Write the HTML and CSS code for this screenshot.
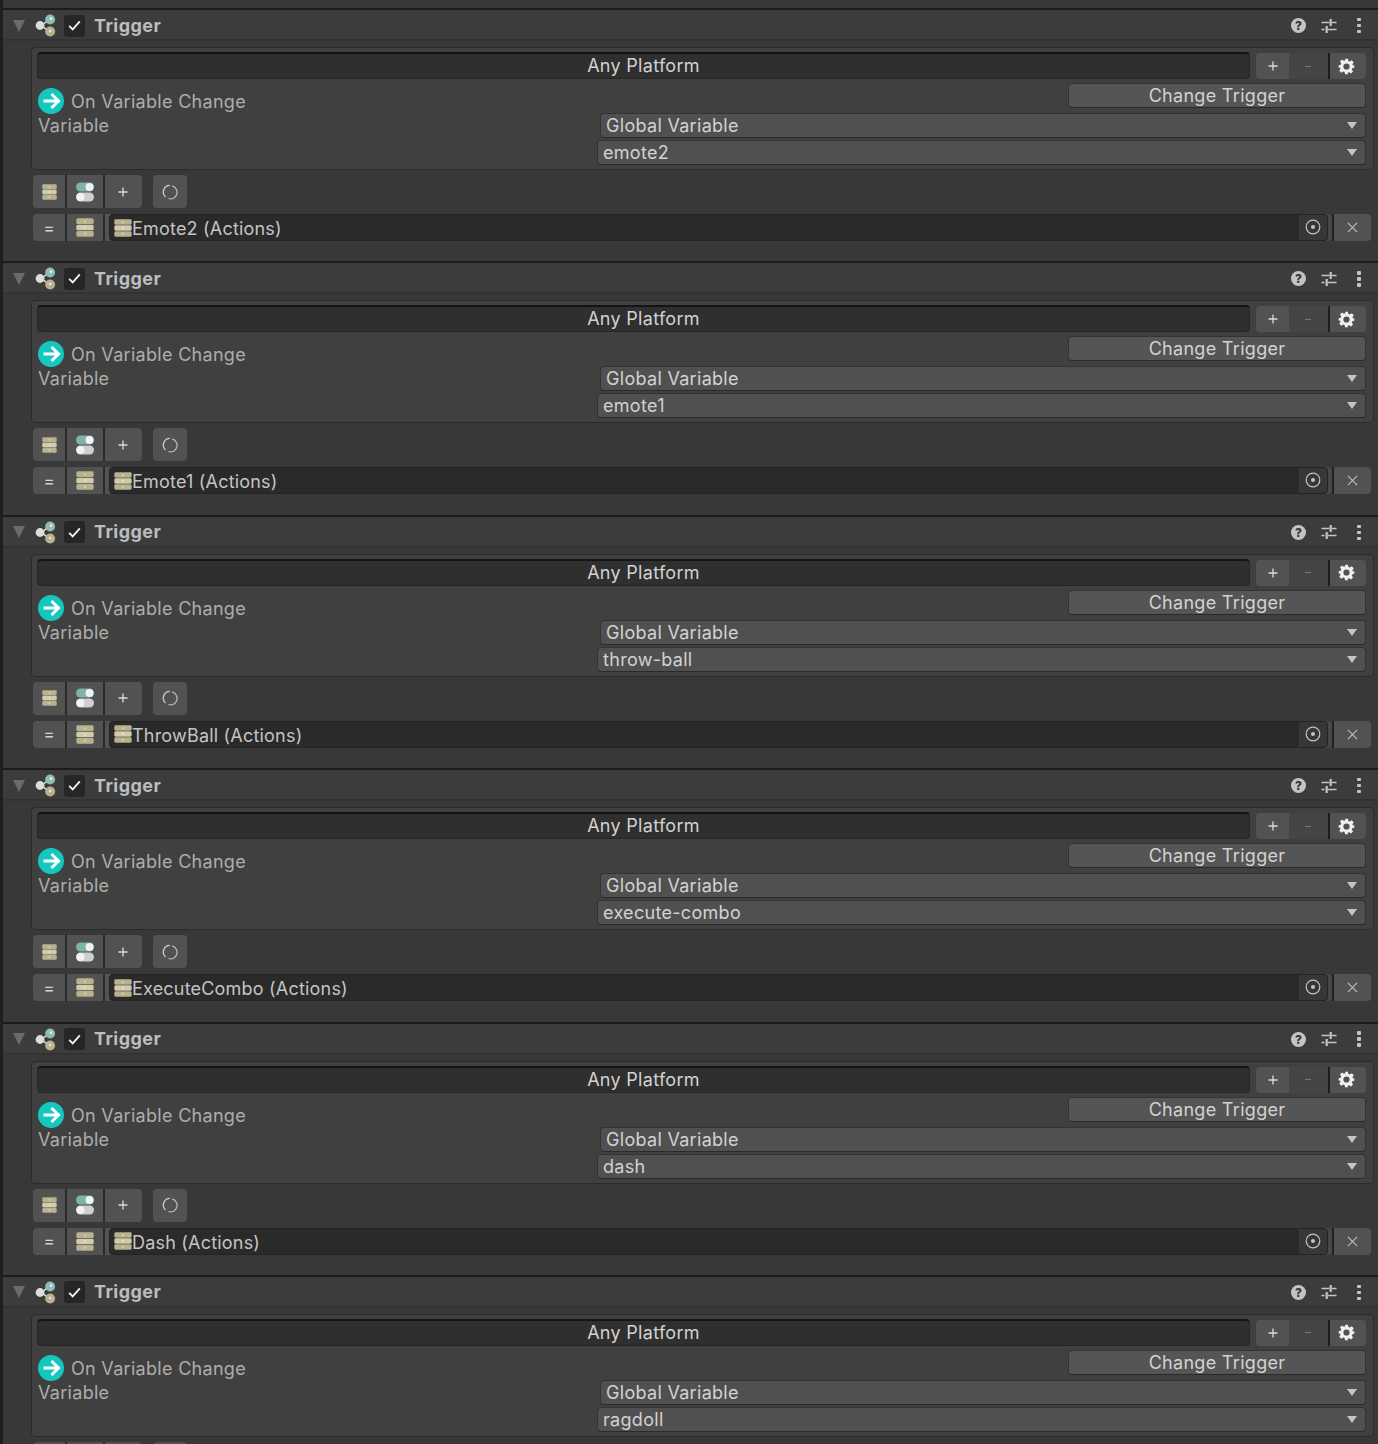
FILE: index.html
```html
<!DOCTYPE html>
<html lang="en">
<head>
<meta charset="utf-8">
<title>Triggers</title>
<link rel="stylesheet" href="styles.css">
</head>
<body>
<svg class="defs" width="0" height="0" aria-hidden="true">
  <symbol id="i-share" viewBox="0 0 24 24">
    <path d="M7 12 L16 5 M7 12 L16 19" stroke="#dfe3e0" stroke-width="1.6" fill="none"/>
    <circle cx="16.5" cy="5.5" r="5.4" fill="#8fbdb6"/><circle cx="17.5" cy="4.5" r="1.4" fill="#e9f4f2"/>
    <circle cx="16.5" cy="18.5" r="5.4" fill="#b9b190"/><circle cx="16.5" cy="18" r="1.4" fill="#eee8d0"/>
    <circle cx="5.5" cy="12" r="4.8" fill="#dddddd"/>
  </symbol>
  <symbol id="i-stack" viewBox="0 0 16 16" preserveAspectRatio="none">
    <rect x="0.3" y="0.3" width="15.4" height="4.8" rx="1.3" fill="#b9b28f"/>
    <rect x="0.3" y="5.6" width="15.4" height="4.8" rx="1.3" fill="#d3ccab"/>
    <rect x="0.3" y="10.9" width="15.4" height="4.8" rx="1.3" fill="#b9b28f"/>
    <path d="M8 2v1.6M8 7.2v1.6M8 12.4v1.6" stroke="#f0ebd6" stroke-width="1"/>
  </symbol>
  <symbol id="i-toggle" viewBox="0 0 20 20">
    <rect x="1" y="0.5" width="18" height="9" rx="4.5" fill="#7db3aa"/><circle cx="14.5" cy="5" r="4" fill="#f2f2f2"/>
    <rect x="1" y="10.5" width="18" height="9" rx="4.5" fill="#cfcfcf"/><circle cx="5.5" cy="15" r="4" fill="#f2f2f2"/>
  </symbol>
  <symbol id="i-gear" viewBox="0 0 24 24">
    <path fill="#f0f0f0" fill-rule="evenodd" d="M10 1h4l.7 3.2 1.9.8 2.8-1.8 2.8 2.8-1.8 2.8.8 1.9L23 10.4v3.2l-2.8.7-.8 1.9 1.8 2.8-2.8 2.8-2.8-1.8-1.9.8L14 23h-4l-.7-3.2-1.9-.8-2.8 1.8-2.8-2.8 1.8-2.8-.8-1.9L1 13.6v-3.2l2.8-.7.8-1.9L2.8 5l2.8-2.8 2.8 1.8 1.9-.8zM12 7.6a4.4 4.4 0 1 0 0 8.8 4.4 4.4 0 0 0 0-8.8z"/>
  </symbol>
  <symbol id="i-sliders" viewBox="0 0 16 16">
    <path d="M0.5 4.5h8M11 4.5h4.5M0.5 11.5h3M7 11.5h8.5" stroke="#c4c4c4" stroke-width="1.3" fill="none"/>
    <path d="M9.7 1v7M5.7 8v7" stroke="#c4c4c4" stroke-width="2.2" fill="none"/>
  </symbol>
  <symbol id="i-arrow" viewBox="0 0 26 26">
    <circle cx="13" cy="13" r="13" fill="#14c8c0"/>
    <path d="M5.5 13H20M13.5 6l7 7-7 7" fill="none" stroke="#ffffff" stroke-width="3"/>
  </symbol>
  <symbol id="i-sync" viewBox="0 0 16 16">
    <path d="M10.2 1.8A6.7 6.7 0 0 1 14.2 11.5 6.7 6.7 0 0 1 6.4 14.5" fill="none" stroke="#b8b8b8" stroke-width="1.3"/>
    <path d="M3.6 13A6.7 6.7 0 0 1 7.8 1.3" fill="none" stroke="#cfcfcf" stroke-width="1.3"/>
  </symbol>
  <symbol id="i-target" viewBox="0 0 16 16">
    <circle cx="8" cy="8" r="6.8" fill="none" stroke="#c4c4c4" stroke-width="1.2"/><circle cx="8" cy="8" r="2" fill="#c4c4c4"/>
  </symbol>
  <symbol id="i-x" viewBox="0 0 12 12">
    <path d="M1 1l10 10M11 1L1 11" stroke="#c4c4c4" stroke-width="1.1" fill="none"/>
  </symbol>
  <symbol id="i-plus" viewBox="0 0 10 10">
    <path d="M5 0.5v9M0.5 5h9" stroke="#dcdcdc" stroke-width="1.3" fill="none"/>
  </symbol>
  <symbol id="i-check" viewBox="0 0 14 12">
    <path d="M1.2 6.5l3.8 3.8 7.8-8.8" stroke="#f2f2f2" stroke-width="2" fill="none"/>
  </symbol>
</svg>

<main class="list">

<section class="item">
  <header class="head">
    <span class="caret"></span><svg class="ic-share"><use href="#i-share"/></svg>
    <span class="check"><svg class="ic-check"><use href="#i-check"/></svg></span>
    <span class="title">Trigger</span>
    <span class="help">?</span><svg class="ic-sliders"><use href="#i-sliders"/></svg><span class="kebab"><i></i><i></i><i></i></span>
  </header>
  <div class="box">
    <div class="platform">
      <div class="platform-bar">Any Platform</div>
      <div class="pm"><span class="pm-btn plus"><svg class="ic-plus"><use href="#i-plus"/></svg></span><span class="pm-btn minus"><b></b></span><span class="pm-btn gear"><svg class="ic-gear"><use href="#i-gear"/></svg></span></div>
    </div>
    <div class="fields">
      <div class="labels">
        <div class="event"><svg class="ic-arrow"><use href="#i-arrow"/></svg><span>On Variable Change</span></div>
        <div class="var-label">Variable</div>
      </div>
      <div class="controls">
        <div class="change">Change Trigger</div>
        <div class="select scope"><span>Global Variable</span><i class="tri"></i></div>
        <div class="select name"><span>emote2</span><i class="tri"></i></div>
      </div>
    </div>
  </div>
  <div class="tools">
    <div class="group"><span class="tb w32"><svg class="ic-stack-s"><use href="#i-stack"/></svg></span><span class="tb w36"><svg class="ic-toggle"><use href="#i-toggle"/></svg></span><span class="tb w38"><svg class="ic-plus"><use href="#i-plus"/></svg></span></div>
    <span class="tb solo"><svg class="ic-sync"><use href="#i-sync"/></svg></span>
  </div>
  <div class="row">
    <div class="group"><span class="tb w32 eq">=</span><span class="tb w36"><svg class="ic-stack"><use href="#i-stack"/></svg></span><span class="tb stub"></span></div>
    <div class="obj"><svg class="ic-stack-o"><use href="#i-stack"/></svg><span class="obj-name">Emote2 (Actions)</span><span class="obj-pick"><svg class="ic-target"><use href="#i-target"/></svg></span></div>
    <span class="remove"><svg class="ic-x"><use href="#i-x"/></svg></span>
  </div>
</section>

<section class="item">
  <header class="head">
    <span class="caret"></span><svg class="ic-share"><use href="#i-share"/></svg>
    <span class="check"><svg class="ic-check"><use href="#i-check"/></svg></span>
    <span class="title">Trigger</span>
    <span class="help">?</span><svg class="ic-sliders"><use href="#i-sliders"/></svg><span class="kebab"><i></i><i></i><i></i></span>
  </header>
  <div class="box">
    <div class="platform">
      <div class="platform-bar">Any Platform</div>
      <div class="pm"><span class="pm-btn plus"><svg class="ic-plus"><use href="#i-plus"/></svg></span><span class="pm-btn minus"><b></b></span><span class="pm-btn gear"><svg class="ic-gear"><use href="#i-gear"/></svg></span></div>
    </div>
    <div class="fields">
      <div class="labels">
        <div class="event"><svg class="ic-arrow"><use href="#i-arrow"/></svg><span>On Variable Change</span></div>
        <div class="var-label">Variable</div>
      </div>
      <div class="controls">
        <div class="change">Change Trigger</div>
        <div class="select scope"><span>Global Variable</span><i class="tri"></i></div>
        <div class="select name"><span>emote1</span><i class="tri"></i></div>
      </div>
    </div>
  </div>
  <div class="tools">
    <div class="group"><span class="tb w32"><svg class="ic-stack-s"><use href="#i-stack"/></svg></span><span class="tb w36"><svg class="ic-toggle"><use href="#i-toggle"/></svg></span><span class="tb w38"><svg class="ic-plus"><use href="#i-plus"/></svg></span></div>
    <span class="tb solo"><svg class="ic-sync"><use href="#i-sync"/></svg></span>
  </div>
  <div class="row">
    <div class="group"><span class="tb w32 eq">=</span><span class="tb w36"><svg class="ic-stack"><use href="#i-stack"/></svg></span><span class="tb stub"></span></div>
    <div class="obj"><svg class="ic-stack-o"><use href="#i-stack"/></svg><span class="obj-name">Emote1 (Actions)</span><span class="obj-pick"><svg class="ic-target"><use href="#i-target"/></svg></span></div>
    <span class="remove"><svg class="ic-x"><use href="#i-x"/></svg></span>
  </div>
</section>

<section class="item">
  <header class="head">
    <span class="caret"></span><svg class="ic-share"><use href="#i-share"/></svg>
    <span class="check"><svg class="ic-check"><use href="#i-check"/></svg></span>
    <span class="title">Trigger</span>
    <span class="help">?</span><svg class="ic-sliders"><use href="#i-sliders"/></svg><span class="kebab"><i></i><i></i><i></i></span>
  </header>
  <div class="box">
    <div class="platform">
      <div class="platform-bar">Any Platform</div>
      <div class="pm"><span class="pm-btn plus"><svg class="ic-plus"><use href="#i-plus"/></svg></span><span class="pm-btn minus"><b></b></span><span class="pm-btn gear"><svg class="ic-gear"><use href="#i-gear"/></svg></span></div>
    </div>
    <div class="fields">
      <div class="labels">
        <div class="event"><svg class="ic-arrow"><use href="#i-arrow"/></svg><span>On Variable Change</span></div>
        <div class="var-label">Variable</div>
      </div>
      <div class="controls">
        <div class="change">Change Trigger</div>
        <div class="select scope"><span>Global Variable</span><i class="tri"></i></div>
        <div class="select name"><span>throw-ball</span><i class="tri"></i></div>
      </div>
    </div>
  </div>
  <div class="tools">
    <div class="group"><span class="tb w32"><svg class="ic-stack-s"><use href="#i-stack"/></svg></span><span class="tb w36"><svg class="ic-toggle"><use href="#i-toggle"/></svg></span><span class="tb w38"><svg class="ic-plus"><use href="#i-plus"/></svg></span></div>
    <span class="tb solo"><svg class="ic-sync"><use href="#i-sync"/></svg></span>
  </div>
  <div class="row">
    <div class="group"><span class="tb w32 eq">=</span><span class="tb w36"><svg class="ic-stack"><use href="#i-stack"/></svg></span><span class="tb stub"></span></div>
    <div class="obj"><svg class="ic-stack-o"><use href="#i-stack"/></svg><span class="obj-name">ThrowBall (Actions)</span><span class="obj-pick"><svg class="ic-target"><use href="#i-target"/></svg></span></div>
    <span class="remove"><svg class="ic-x"><use href="#i-x"/></svg></span>
  </div>
</section>

<section class="item">
  <header class="head">
    <span class="caret"></span><svg class="ic-share"><use href="#i-share"/></svg>
    <span class="check"><svg class="ic-check"><use href="#i-check"/></svg></span>
    <span class="title">Trigger</span>
    <span class="help">?</span><svg class="ic-sliders"><use href="#i-sliders"/></svg><span class="kebab"><i></i><i></i><i></i></span>
  </header>
  <div class="box">
    <div class="platform">
      <div class="platform-bar">Any Platform</div>
      <div class="pm"><span class="pm-btn plus"><svg class="ic-plus"><use href="#i-plus"/></svg></span><span class="pm-btn minus"><b></b></span><span class="pm-btn gear"><svg class="ic-gear"><use href="#i-gear"/></svg></span></div>
    </div>
    <div class="fields">
      <div class="labels">
        <div class="event"><svg class="ic-arrow"><use href="#i-arrow"/></svg><span>On Variable Change</span></div>
        <div class="var-label">Variable</div>
      </div>
      <div class="controls">
        <div class="change">Change Trigger</div>
        <div class="select scope"><span>Global Variable</span><i class="tri"></i></div>
        <div class="select name"><span>execute-combo</span><i class="tri"></i></div>
      </div>
    </div>
  </div>
  <div class="tools">
    <div class="group"><span class="tb w32"><svg class="ic-stack-s"><use href="#i-stack"/></svg></span><span class="tb w36"><svg class="ic-toggle"><use href="#i-toggle"/></svg></span><span class="tb w38"><svg class="ic-plus"><use href="#i-plus"/></svg></span></div>
    <span class="tb solo"><svg class="ic-sync"><use href="#i-sync"/></svg></span>
  </div>
  <div class="row">
    <div class="group"><span class="tb w32 eq">=</span><span class="tb w36"><svg class="ic-stack"><use href="#i-stack"/></svg></span><span class="tb stub"></span></div>
    <div class="obj"><svg class="ic-stack-o"><use href="#i-stack"/></svg><span class="obj-name">ExecuteCombo (Actions)</span><span class="obj-pick"><svg class="ic-target"><use href="#i-target"/></svg></span></div>
    <span class="remove"><svg class="ic-x"><use href="#i-x"/></svg></span>
  </div>
</section>

<section class="item">
  <header class="head">
    <span class="caret"></span><svg class="ic-share"><use href="#i-share"/></svg>
    <span class="check"><svg class="ic-check"><use href="#i-check"/></svg></span>
    <span class="title">Trigger</span>
    <span class="help">?</span><svg class="ic-sliders"><use href="#i-sliders"/></svg><span class="kebab"><i></i><i></i><i></i></span>
  </header>
  <div class="box">
    <div class="platform">
      <div class="platform-bar">Any Platform</div>
      <div class="pm"><span class="pm-btn plus"><svg class="ic-plus"><use href="#i-plus"/></svg></span><span class="pm-btn minus"><b></b></span><span class="pm-btn gear"><svg class="ic-gear"><use href="#i-gear"/></svg></span></div>
    </div>
    <div class="fields">
      <div class="labels">
        <div class="event"><svg class="ic-arrow"><use href="#i-arrow"/></svg><span>On Variable Change</span></div>
        <div class="var-label">Variable</div>
      </div>
      <div class="controls">
        <div class="change">Change Trigger</div>
        <div class="select scope"><span>Global Variable</span><i class="tri"></i></div>
        <div class="select name"><span>dash</span><i class="tri"></i></div>
      </div>
    </div>
  </div>
  <div class="tools">
    <div class="group"><span class="tb w32"><svg class="ic-stack-s"><use href="#i-stack"/></svg></span><span class="tb w36"><svg class="ic-toggle"><use href="#i-toggle"/></svg></span><span class="tb w38"><svg class="ic-plus"><use href="#i-plus"/></svg></span></div>
    <span class="tb solo"><svg class="ic-sync"><use href="#i-sync"/></svg></span>
  </div>
  <div class="row">
    <div class="group"><span class="tb w32 eq">=</span><span class="tb w36"><svg class="ic-stack"><use href="#i-stack"/></svg></span><span class="tb stub"></span></div>
    <div class="obj"><svg class="ic-stack-o"><use href="#i-stack"/></svg><span class="obj-name">Dash (Actions)</span><span class="obj-pick"><svg class="ic-target"><use href="#i-target"/></svg></span></div>
    <span class="remove"><svg class="ic-x"><use href="#i-x"/></svg></span>
  </div>
</section>

<section class="item">
  <header class="head">
    <span class="caret"></span><svg class="ic-share"><use href="#i-share"/></svg>
    <span class="check"><svg class="ic-check"><use href="#i-check"/></svg></span>
    <span class="title">Trigger</span>
    <span class="help">?</span><svg class="ic-sliders"><use href="#i-sliders"/></svg><span class="kebab"><i></i><i></i><i></i></span>
  </header>
  <div class="box">
    <div class="platform">
      <div class="platform-bar">Any Platform</div>
      <div class="pm"><span class="pm-btn plus"><svg class="ic-plus"><use href="#i-plus"/></svg></span><span class="pm-btn minus"><b></b></span><span class="pm-btn gear"><svg class="ic-gear"><use href="#i-gear"/></svg></span></div>
    </div>
    <div class="fields">
      <div class="labels">
        <div class="event"><svg class="ic-arrow"><use href="#i-arrow"/></svg><span>On Variable Change</span></div>
        <div class="var-label">Variable</div>
      </div>
      <div class="controls">
        <div class="change">Change Trigger</div>
        <div class="select scope"><span>Global Variable</span><i class="tri"></i></div>
        <div class="select name"><span>ragdoll</span><i class="tri"></i></div>
      </div>
    </div>
  </div>
  <div class="tools">
    <div class="group"><span class="tb w32"><svg class="ic-stack-s"><use href="#i-stack"/></svg></span><span class="tb w36"><svg class="ic-toggle"><use href="#i-toggle"/></svg></span><span class="tb w38"><svg class="ic-plus"><use href="#i-plus"/></svg></span></div>
    <span class="tb solo"><svg class="ic-sync"><use href="#i-sync"/></svg></span>
  </div>
</section>

</main>
</body>
</html>
```
FILE: styles.css
```css
* { box-sizing: border-box; }
html, body { margin: 0; height: 1444px; overflow: hidden; }
body {
  background: #383838;
  color: #d2d2d2;
  font: 18px/24px Inter, "Liberation Sans", sans-serif;
  letter-spacing: 0.3px;
  border-left: 3px solid #1f1f1f;
  padding-top: 8px;
}
.defs { position: absolute; }
.list { display: flex; flex-direction: column; }

.item { height: 253.4px; flex: none; border-top: 2px solid #1c1c1c; background: #383838; }

/* header */
.head {
  height: 31px;
  display: flex;
  align-items: center;
  background: #3c3c3c;
  border-bottom: 2px solid #333333;
  padding: 2px 15px 0 10px;
}
.caret { width: 0; height: 0; border: 6.5px solid transparent; border-top: 12px solid #6b6b6b; border-bottom: 0; margin-right: 10px; }
.ic-share { width: 22px; height: 23px; margin-right: 7px; }
.check {
  width: 21px; height: 22px; background: #262626; border-radius: 3px;
  display: flex; align-items: center; justify-content: center; margin-right: 9px;
}
.ic-check { width: 13px; height: 11px; }
.title { font-weight: 700; flex: 1; color: #bdbdbd; letter-spacing: 0.45px; }
.help {
  width: 15px; height: 15px; border-radius: 50%; background: #c4c4c4; color: #383838;
  font-size: 12px; font-weight: 800; line-height: 15px; text-align: center; letter-spacing: 0; margin-right: 15px;
}
.ic-sliders { width: 16px; height: 16px; margin-right: 20px; }
.kebab { display: flex; flex-direction: column; gap: 2.5px; margin-right: 2px; }
.kebab i { width: 4px; height: 3.5px; background: #c4c4c4; border-radius: 1px; }

/* box */
.box {
  margin: 6px 4px 0 28px;
  height: 123px;
  background: #404040;
  border: 1px solid #2b2b2b;
  border-radius: 4px;
  padding: 4px 7px 0 5px;
}
.platform { display: flex; gap: 6px; height: 27px; }
.platform-bar {
  flex: 1; background: #2f2f2f; border: 1px solid #262626; border-top: 2px solid #141414; border-radius: 4px;
  text-align: center; line-height: 24px;
}
.pm { width: 110px; display: flex; margin-top: 1px; height: 26px; }
.pm-btn { display: flex; align-items: center; justify-content: center; }
.pm-btn.plus { width: 33px; background: #525252; border-radius: 4px 0 0 4px; }
.pm-btn.minus { width: 39px; background: #454545; padding-right: 2px; }
.pm-btn.minus b { width: 6px; height: 1px; background: #777777; }
.pm-btn.gear { width: 38px; background: #525252; border-left: 2px solid #1e1e1e; border-radius: 0 4px 4px 0; padding-right: 3px; }
.ic-plus { width: 10px; height: 10px; }
.ic-gear { width: 17px; height: 17px; }

.fields { display: flex; margin-top: 4px; }
.labels { flex: 1; padding: 5px 0 0 1px; }
.event { display: flex; align-items: center; gap: 7px; height: 26px; color: #adadad; }
.event span { padding-top: 2px; }
.ic-arrow { width: 26px; height: 26px; }
.var-label { color: #adadad; line-height: 22px; padding-top: 1px; }
.controls { width: 769px; display: flex; flex-direction: column; align-items: flex-end; }
.change {
  width: 298px; height: 25px; background: #555555; border: 1px solid #333333; border-bottom-color: #2a2a2a;
  border-radius: 4px; text-align: center; line-height: 23px;
}
.select {
  height: 25px; background: #505050; border: 1px solid #333333; border-bottom-color: #2a2a2a; border-radius: 4px;
  display: flex; align-items: center; justify-content: space-between; line-height: 23px;
}
.select.scope { width: 766px; margin-top: 5px; padding: 0 8px 0 5px; }
.select.name { width: 769px; margin-top: 2px; padding: 0 8px 0 5px; }
.tri { width: 0; height: 0; border: 5.5px solid transparent; border-top: 7px solid #c4c4c4; border-bottom: 0; }

/* toolbar */
.tools { display: flex; gap: 11px; margin: 5px 0 0 30px; height: 33px; }
.group { display: flex; }
.tb {
  display: flex; align-items: center; justify-content: center; height: 100%;
  background: #525252; border-right: 2px solid #2a2a2a;
}
.group .tb:first-child { border-radius: 4px 0 0 4px; }
.group .tb:last-child { border-radius: 0 4px 4px 0; border-right: 0; }
.w32 { width: 34px; }
.w36 { width: 38px; }
.w38 { width: 37px; padding-right: 1px; }
.tb.solo { width: 34px; border: 0; border-radius: 4px; padding-right: 1px; }
.ic-stack-s { width: 15px; height: 16px; }
.ic-toggle { width: 20px; height: 20px; }
.ic-sync { width: 16px; height: 16px; }

/* object row */
.row { display: flex; align-items: stretch; height: 27px; margin: 6px 7px 0 30px; }
.row .group { height: 27px; }
.eq { color: #d2d2d2; font-size: 17px; letter-spacing: 0; }
.stub { width: 6px; background: #525252; }
.row .group .tb.stub { border-radius: 0; }
.ic-stack { width: 18px; height: 19px; flex: none; }
.ic-stack-o { width: 18px; height: 18px; flex: none; }
.obj {
  flex: 1; margin-left: -2px; display: flex; align-items: center; background: #2a2a2a;
  border: 1px solid #232323; border-radius: 4px; padding-left: 4px; overflow: hidden;
  box-shadow: 4px 0 0 #484848;
}
.obj-name { flex: 1; color: #c4c4c4; padding-top: 3px; letter-spacing: 0.2px; }
.obj-pick { width: 28px; align-self: stretch; background: #373737; display: flex; align-items: center; justify-content: center; }
.ic-target { width: 16px; height: 16px; margin-top: -1px; }
.remove {
  width: 39px; margin-left: 4px; background: #525252; border-radius: 0 4px 4px 0; border-left: 2px solid #222222;
  display: flex; align-items: center; justify-content: center;
}
.ic-x { width: 11px; height: 11px; }
```
